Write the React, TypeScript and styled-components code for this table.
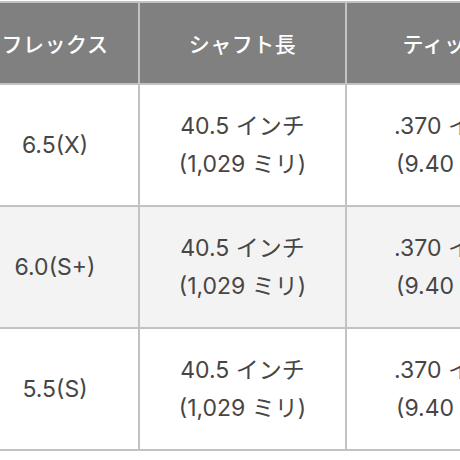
import React from "react";
import styled, { createGlobalStyle } from "styled-components";

const Global = createGlobalStyle`
  html, body { margin: 0; padding: 0; background: #ffffff; }
  body { font-family: Inter, "Noto Sans CJK JP", sans-serif; }
`;

const Viewport = styled.div`
  width: 460px;
  height: 460px;
  overflow: hidden;
  background: #ffffff;
  padding-top: 1px;
  box-sizing: border-box;
`;

const Table = styled.table`
  border-collapse: collapse;
  table-layout: fixed;
  margin-left: -30px;
  width: 594px;
  color: #464646;
`;

const HeadCell = styled.th`
  background: #808080;
  color: #ffffff;
  font-weight: 500;
  font-size: 21px;
  height: 80px;
  padding: 0;
  text-align: center;
  vertical-align: middle;
  border: 2px solid #c2c2c2;
  letter-spacing: 0.5px;
`;

const Row = styled.tr<{ $shaded?: boolean }>`
  background: ${(p) => (p.$shaded ? "#f3f3f3" : "#ffffff")};
`;

const Cell = styled.td`
  height: 120px;
  padding: 0;
  text-align: center;
  vertical-align: middle;
  border: 2px solid #c2c2c2;
  font-size: 23px;
  line-height: 38px;
  white-space: nowrap;
`;

const Line = styled.div``;

const rows = [
  { flex: "6.5(X)" },
  { flex: "6.0(S+)" },
  { flex: "5.5(S)" },
];

export default function App() {
  return (
    <>
      <Global />
      <Viewport>
        <Table>
          <colgroup>
            <col style={{ width: 168 }} />
            <col style={{ width: 207 }} />
            <col style={{ width: 219 }} />
          </colgroup>
          <thead>
            <tr>
              <HeadCell>フレックス</HeadCell>
              <HeadCell>シャフト長</HeadCell>
              <HeadCell>ティップ径</HeadCell>
            </tr>
          </thead>
          <tbody>
            {rows.map((r, i) => (
              <Row key={r.flex} $shaded={i === 1}>
                <Cell>{r.flex}</Cell>
                <Cell>
                  <Line>40.5 インチ</Line>
                  <Line>(1,029 ミリ)</Line>
                </Cell>
                <Cell>
                  <Line>.370 インチ</Line>
                  <Line>(9.40 ミリ)</Line>
                </Cell>
              </Row>
            ))}
          </tbody>
        </Table>
      </Viewport>
    </>
  );
}
